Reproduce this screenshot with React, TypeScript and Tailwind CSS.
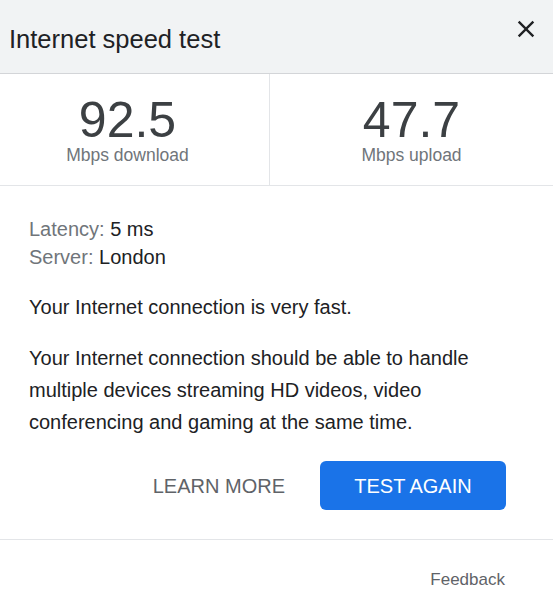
export default function App() {
  return (
    <div className="w-[553px] h-[600px] bg-white overflow-hidden font-['Liberation_Sans',Arial,sans-serif]">
      <div className="h-[74px] bg-[#f1f3f4] border-b border-[#d3d5d8] flex items-start justify-between">
        <h1 className="pl-[9px] pt-[24px] text-[25.5px] leading-[30px] text-[#202124]">Internet speed test</h1>
        <button className="mr-[13px] mt-[15px] text-[#202124]" aria-label="Close">
          <svg width="28" height="28" viewBox="0 0 24 24" fill="currentColor">
            <path d="M19 6.41L17.59 5 12 10.59 6.41 5 5 6.41 10.59 12 5 17.59 6.41 19 12 13.41 17.59 19 19 17.59 13.41 12z" />
          </svg>
        </button>
      </div>

      <div className="grid grid-cols-[270px_1fr] border-b border-[#e3e5e8]">
        <div className="flex flex-col items-center pt-[18px] pb-[23px] pr-[14px] border-r border-[#e3e5e8]">
          <div className="text-[50px] leading-[56px] text-[#3c4043]">92.5</div>
          <div className="text-[17.5px] leading-[14px] text-[#70757a]">Mbps download</div>
        </div>
        <div className="flex flex-col items-center pt-[18px] pb-[23px]">
          <div className="text-[50px] leading-[56px] text-[#3c4043]">47.7</div>
          <div className="text-[17.5px] leading-[14px] text-[#70757a]">Mbps upload</div>
        </div>
      </div>

      <div className="pl-[29px] pr-[30px] pt-[29px] text-[20px] text-[#202124]">
        <div className="leading-[28px]">
          <div><span className="text-[#70757a]">Latency:</span> 5 ms</div>
          <div><span className="text-[#70757a]">Server:</span> London</div>
        </div>
        <p className="mt-[20px] leading-[32px]">Your Internet connection is very fast.</p>
        <p className="mt-[19px] leading-[32px]">
          Your Internet connection should be able to handle multiple devices streaming HD videos, video conferencing and gaming at the same time.
        </p>
      </div>

      <div className="flex justify-end items-center pr-[47px] mt-[23px]">
        <button className="h-[49px] px-[35px] text-[20px] text-[#5f6368]">LEARN MORE</button>
        <button className="h-[49px] w-[186px] rounded-[6px] bg-[#1a73e8] text-[20px] text-white">TEST AGAIN</button>
      </div>

      <div className="mt-[29px] border-t border-[#e3e5e8] flex justify-end pr-[48px] pt-[30px]">
        <span className="text-[17px] leading-[20px] text-[#5f6368]">Feedback</span>
      </div>
    </div>
  );
}
